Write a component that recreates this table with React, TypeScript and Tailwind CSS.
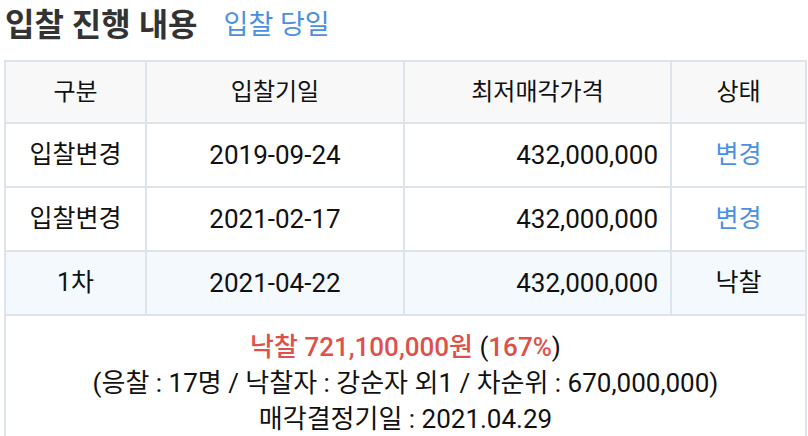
const rows = [
  { kind: '입찰변경', date: '2019-09-24', price: '432,000,000', status: '변경', highlight: false },
  { kind: '입찰변경', date: '2021-02-17', price: '432,000,000', status: '변경', highlight: false },
  { kind: '1차', date: '2021-04-22', price: '432,000,000', status: '낙찰', highlight: true },
];

export default function App() {
  return (
    <div
      className="w-[808px] h-[436px] overflow-hidden bg-white text-[#111]"
      style={{ fontFamily: 'Roboto, "Noto Sans CJK KR", sans-serif' }}
    >
      {/* Title */}
      <div className="flex items-center h-[50px] pl-[5px] gap-[26px]">
        <h2 className="text-[32px] font-bold text-[#333] leading-none">입찰 진행 내용</h2>
        <span className="text-[27px] text-[#4a90e2] leading-none">입찰 당일</span>
      </div>

      {/* Table */}
      <table className="mt-[10px] ml-[4px] w-[801px] border-collapse text-[24px] table-fixed">
        <colgroup>
          <col className="w-[141px]" />
          <col className="w-[258px]" />
          <col className="w-[267px]" />
          <col className="w-[135px]" />
        </colgroup>
        <thead>
          <tr className="h-[62px] bg-[#f8f8f8]">
            <th className="border-2 border-[#dde3ea] font-normal">구분</th>
            <th className="border-2 border-[#dde3ea] font-normal">입찰기일</th>
            <th className="border-2 border-[#dde3ea] font-normal">최저매각가격</th>
            <th className="border-2 border-[#dde3ea] font-normal">상태</th>
          </tr>
        </thead>
        <tbody>
          {rows.map((r, i) => (
            <tr key={i} className={`h-[64px] ${r.highlight ? 'bg-[#f4f9fd]' : 'bg-white'}`}>
              <td className="border-2 border-[#dde3ea] text-center text-[25px]">{r.kind}</td>
              <td className="border-2 border-[#dde3ea] text-center text-[26px]">{r.date}</td>
              <td className="border-2 border-[#dde3ea] text-right pr-[12px] text-[26px]">{r.price}</td>
              <td
                className={`border-2 border-[#dde3ea] text-center text-[25px] ${
                  r.status === '변경' ? 'text-[#4a90e2]' : ''
                }`}
              >
                {r.status}
              </td>
            </tr>
          ))}
          <tr>
            <td colSpan={4} className="border-2 border-[#dde3ea] text-center text-[26px] pt-[13px] pb-[20px] leading-[36px]">
              <div>
                <span className="text-[#e0504a] font-medium">낙찰 721,100,000원</span> (
                <span className="text-[#e0504a] font-medium">167%</span>)
              </div>
              <div>(응찰 : 17명 / 낙찰자 : 강순자 외1 / 차순위 : 670,000,000)</div>
              <div>매각결정기일 : 2021.04.29</div>
            </td>
          </tr>
        </tbody>
      </table>
    </div>
  );
}
